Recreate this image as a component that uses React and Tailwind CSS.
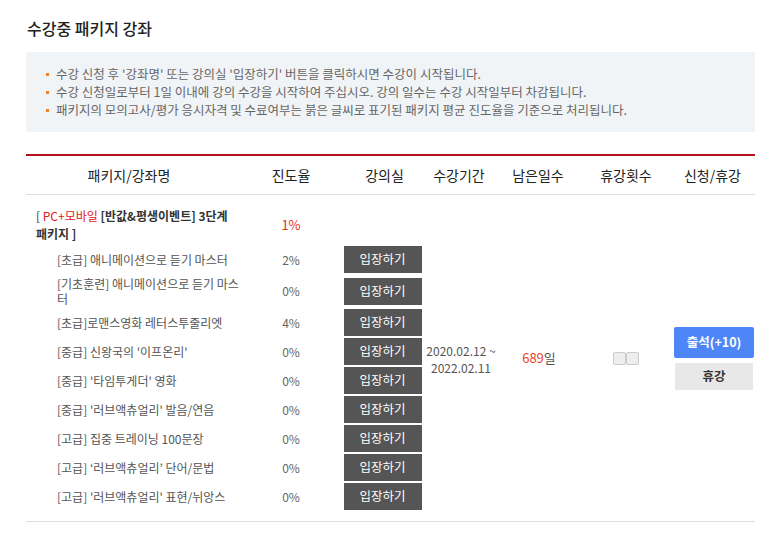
import React from 'react';

const notices = [
    "수강 신청 후 '강좌명' 또는 강의실 '입장하기' 버튼을 클릭하시면 수강이 시작됩니다.",
    '수강 신청일로부터 1일 이내에 강의 수강을 시작하여 주십시오. 강의 일수는 수강 시작일부터 차감됩니다.',
    '패키지의 모의고사/평가 응시자격 및 수료여부는 붉은 글씨로 표기된 패키지 평균 진도율을 기준으로 처리됩니다.',
];

const lectures = [
    { name: '[초급] 애니메이션으로 듣기 마스터', rate: '2%' },
    { name: '[기초훈련] 애니메이션으로 듣기 마스터', rate: '0%', tall: true },
    { name: '[초급]로맨스영화 레터스투줄리엣', rate: '4%' },
    { name: "[중급] 신왕국의 '이프온리'", rate: '0%' },
    { name: "[중급] '타임투게더' 영화", rate: '0%' },
    { name: "[중급] '러브액츄얼리' 발음/연음", rate: '0%' },
    { name: '[고급] 집중 트레이닝 100문장', rate: '0%' },
    { name: '[고급] ‘러브액츄얼리’ 단어/문법', rate: '0%' },
    { name: "[고급] '러브액츄얼리' 표현/뉘앙스", rate: '0%' },
];

const LectureRow = ({ name, rate, tall }) => (
    <div className="grid grid-cols-[231px_68px_99px] items-center min-h-[29px]">
        <div className={`pl-[31px] pr-[10px] leading-[15px] text-[#555] ${tall ? 'py-[2px]' : ''}`}>{name}</div>
        <div className="text-center text-[#666]">{rate}</div>
        <div className="pl-[16px] flex justify-center">
            <button className="w-[78px] h-[27px] bg-[#555] text-white text-[12.5px]">입장하기</button>
        </div>
    </div>
);

export default function App() {
    return (
        <div className="bg-white min-h-[533px] text-[12px] text-[#333]" style={{ fontFamily: '"Noto Sans CJK KR", "Noto Sans", sans-serif' }}>
            <div className="ml-[26px] w-[729px] pt-[16px]">
                <h1 className="text-[16px] font-medium text-[#222] leading-[24px] pl-px">수강중 패키지 강좌</h1>

                {/* notice box */}
                <div className="mt-[12px] bg-[#f1f4f7] pl-[20px] pt-[13px] h-[80px]">
                    {notices.map((t) => (
                        <div key={t} className="flex items-center leading-[18px] text-[12.5px] text-[#666]">
                            <span className="w-[3px] h-[3px] bg-[#f0822d] mr-[7px] shrink-0" />
                            <span>{t}</span>
                        </div>
                    ))}
                </div>

                {/* table */}
                <div className="mt-[22px] border-t-2 border-[#b5121b]">
                    <div className="grid grid-cols-[231px_68px_99px_70px_88px_88px_85px] items-center h-[39px] border-b border-[#ddd] text-[14px] text-[#222]">
                        <div className="text-center pr-[25px]">패키지/강좌명</div>
                        <div className="text-center">진도율</div>
                        <div className="text-center pl-[20px]">강의실</div>
                        <div className="text-center">수강기간</div>
                        <div className="text-center">남은일수</div>
                        <div className="text-center">휴강횟수</div>
                        <div className="text-center">신청/휴강</div>
                    </div>

                    <div className="flex border-b border-[#ddd]">
                        <div className="w-[398px] pb-[10px]">
                            <div className="grid grid-cols-[231px_68px] items-center pt-[12px] pb-[2px]">
                                <div className="pl-[10px] leading-[18px] text-[#333]">
                                    <div>
                                        [ <span className="text-[#e0201b]">PC+모바일</span>{' '}
                                        <span className="font-bold">[반값&amp;평생이벤트] 3단계</span>
                                    </div>
                                    <div className="font-bold">패키지 ]</div>
                                </div>
                                <div className="text-center text-[13px] text-[#e0301e]">1%</div>
                            </div>
                            {lectures.map((l) => (
                                <LectureRow key={l.name} {...l} />
                            ))}
                        </div>

                        <div className="flex-1 grid grid-cols-[72px_86px_88px_85px] items-center">
                            <div className="text-center text-[#555] whitespace-nowrap pl-[2px] pt-[2px]">
                                <div className="leading-[17px]">2020.02.12 ~</div>
                                <div className="leading-[17px]">2022.02.11</div>
                            </div>
                            <div className="text-center text-[13px] text-[#555]">
                                <span className="text-[#e8452c]">689</span>일
                            </div>
                            <div className="flex justify-center">
                                <span className="w-[13px] h-[13px] bg-[#eee] border border-[#ccc] rounded-[2px]" />
                                <span className="w-[13px] h-[13px] bg-[#eee] border border-[#ccc] rounded-[2px]" />
                            </div>
                            <div className="flex flex-col items-center gap-[5px] pl-[3px]">
                                <button className="w-[80px] h-[31px] rounded-[2px] bg-[#4f86f7] text-white text-[12.5px] font-bold">출석(+10)</button>
                                <button className="w-[78px] h-[27px] bg-[#e8e8e8] text-[#333] text-[12.5px] font-bold">휴강</button>
                            </div>
                        </div>
                    </div>
                </div>
            </div>
        </div>
    );
}
